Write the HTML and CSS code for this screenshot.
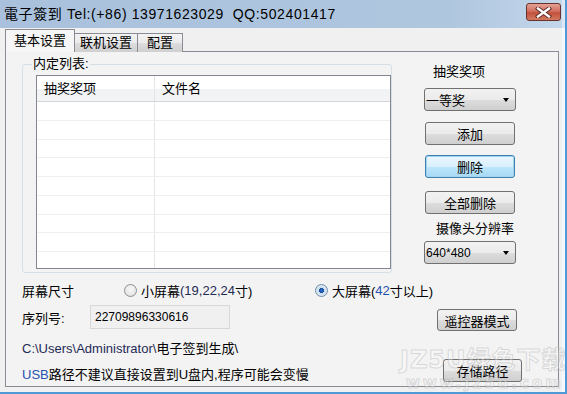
FILE: index.html
```html
<!DOCTYPE html>
<html lang="zh-CN">
<head>
    <meta charset="UTF-8">
    <title>電子簽到</title>
    <link rel="stylesheet" href="styles.css">
</head>
<body>
    <div class="window">
        <div class="titlebar">
            <span class="title">電子簽到 Tel:(+86) 13971623029&nbsp;&nbsp;QQ:502401417</span>
            <div class="close-btn">
                <svg width="17" height="11" viewBox="0 0 17 11">
                    <path d="M3 1.5 L14 9.5 M14 1.5 L3 9.5" stroke="#5a2a24" stroke-width="4.2" stroke-linecap="square"/>
                    <path d="M3 1.5 L14 9.5 M14 1.5 L3 9.5" stroke="#ffffff" stroke-width="2.4" stroke-linecap="square"/>
                </svg>
            </div>
        </div>

        <div class="client">
            <div class="tabs">
                <div class="tab active">基本设置</div>
                <div class="tab">联机设置</div>
                <div class="tab tab-wide">配置</div>
            </div>

            <div class="panel">
                <div class="top">
                    <fieldset class="group">
                        <legend>内定列表:</legend>
                        <div class="list">
                            <div class="list-head">
                                <div class="cell col1">抽奖奖项</div>
                                <div class="cell col2">文件名</div>
                            </div>
                            <div class="list-row"><div class="cell col1"></div><div class="cell col2"></div></div>
                            <div class="list-row"><div class="cell col1"></div><div class="cell col2"></div></div>
                            <div class="list-row"><div class="cell col1"></div><div class="cell col2"></div></div>
                            <div class="list-row"><div class="cell col1"></div><div class="cell col2"></div></div>
                            <div class="list-row"><div class="cell col1"></div><div class="cell col2"></div></div>
                            <div class="list-row"><div class="cell col1"></div><div class="cell col2"></div></div>
                            <div class="list-row"><div class="cell col1"></div><div class="cell col2"></div></div>
                            <div class="list-row"><div class="cell col1"></div><div class="cell col2"></div></div>
                            <div class="list-row"><div class="cell col1"></div><div class="cell col2"></div></div>
                        </div>
                    </fieldset>

                    <div class="side">
                        <div class="side-label prize-label">抽奖奖项</div>
                        <div class="combo prize-combo"><span>一等奖</span><span class="arrow"></span></div>
                        <button class="btn add-btn">添加</button>
                        <button class="btn focused del-btn">删除</button>
                        <button class="btn clear-btn">全部删除</button>
                        <div class="side-label cam-label">摄像头分辨率</div>
                        <div class="combo cam-combo"><span class="res">640*480</span><span class="arrow"></span></div>
                    </div>
                </div>

                <div class="row size-row">
                    <span class="row-label">屏幕尺寸</span>
                    <label class="radio small-screen"><span class="dot"></span>小屏幕<span class="ascii">(19,22,24</span>寸)</label>
                    <label class="radio"><span class="dot checked"></span>大屏幕(<span class="blue">42</span>寸以上)</label>
                </div>

                <div class="row serial-row">
                    <span class="serial-label">序列号:</span>
                    <div class="textbox">22709896330616</div>
                    <button class="btn remote-btn">遥控器模式</button>
                </div>

                <div class="row path-row">
                    <span class="ascii">C:\Users\Administrator\</span>电子签到生成\
                </div>

                <div class="row usb-row">
                    <span class="usb-text"><span class="blue">USB</span>路径不建议直接设置到U盘内,程序可能会变慢</span>
                    <button class="btn save-btn">存储路径</button>
                </div>
            </div>
        </div>

        <div class="watermark">
            <div class="wm-big">JZ5U绿色下载</div>
            <div class="wm-small">www.jz5u.com</div>
        </div>
    </div>
</body>
</html>
```

FILE: styles.css
```css
body {
    margin: 0;
    background-color: #f0f0f0;
    font-family: "Liberation Sans", "Noto Sans CJK SC", sans-serif;
    font-size: 13px;
    color: #000;
}
.window {
    position: relative;
    width: 567px;
    height: 394px;
    box-sizing: border-box;
    border-right: 2px solid #4f9ad6;
    border-bottom: 2px solid #4f9ad6;
    background-color: #f0f0f0;
    overflow: hidden;
}
.titlebar {
    height: 28px;
    display: flex;
    align-items: flex-start;
    justify-content: space-between;
    background: linear-gradient(to right, #a9c1dc 0%, #afc6df 80%, #c3d6ea 100%);
    border-right: 3px solid #dbe7f4;
}
.title {
    font-family: "Liberation Sans", "Noto Sans CJK TC", sans-serif;
    font-size: 14px;
    letter-spacing: 0.6px;
    line-height: 16px;
    padding: 6px 0 0 4px;
    white-space: nowrap;
}
.close-btn {
    width: 33px;
    height: 16px;
    margin: 3px 1px 0 0;
    border: 1px solid #6a322c;
    border-radius: 3px;
    background: linear-gradient(to bottom, #e4a294 0%, #d0705f 45%, #c2503d 55%, #d27a5f 100%);
    display: flex;
    align-items: center;
    justify-content: center;
}
.client {
    border-right: 3px solid #f4f7fb;
    height: 364px;
    padding-top: 2px;
}
.tabs {
    display: flex;
    align-items: flex-end;
    margin-left: 5px;
    height: 22px;
    margin-bottom: -1px;
    position: relative;
}
.tab {
    height: 18px;
    line-height: 18px;
    padding: 0 5px;
    margin-right: -1px;
    border: 1px solid #898c95;
    border-bottom: none;
    background: linear-gradient(to bottom, #f2f2f2 0%, #ebebeb 50%, #dddddd 51%, #cfcfcf 100%);
}
.tab-wide {
    padding: 0 9px;
}
.tab.active {
    height: 22px;
    line-height: 21px;
    padding: 0 8px;
    background: #f6f6f6;
    position: relative;
    z-index: 1;
}
.panel {
    margin-left: 5px;
    width: 554px;
    height: 336px;
    box-sizing: border-box;
    border: 1px solid #898c95;
    background: #f3f3f3;
    padding-left: 16px;
}
.top {
    display: flex;
    height: 224px;
}
.group {
    margin: 5px 0 0 0;
    padding: 0;
    width: 370px;
    height: 216px;
    box-sizing: border-box;
    border: 1px solid #d5dfe5;
    border-radius: 3px;
}
.group legend {
    padding: 0 1px;
    margin-left: 9px;
    line-height: 14px;
}
.list {
    margin: 4px 0 0 13px;
    width: 355px;
    height: 194px;
    box-sizing: border-box;
    border: 1px solid #828790;
    background: #fff;
    overflow: hidden;
}
.list-head {
    display: flex;
    height: 25px;
    border-bottom: 1px solid #d5d5d5;
    background: linear-gradient(to bottom, #ffffff 0%, #ffffff 50%, #f1f2f4 51%, #f3f4f6 100%);
}
.list-head .cell {
    line-height: 25px;
    padding-left: 7px;
}
.list-row {
    display: flex;
    height: 18.75px;
    box-sizing: border-box;
    border-bottom: 1px solid #efefef;
}
.cell {
    box-sizing: border-box;
}
.col1 {
    width: 118px;
    border-right: 1px solid #e5e5e5;
}
.col2 {
    flex: 1;
}
.side {
    margin-left: 32px;
    width: 93px;
    display: flex;
    flex-direction: column;
}
.side-label {
    line-height: 16px;
}
.prize-label {
    margin-top: 12px;
    padding-left: 9px;
}
.cam-label {
    margin-top: 7px;
    padding-left: 12px;
}
.combo {
    height: 23px;
    width: 92px;
    box-sizing: border-box;
    border: 1px solid #707070;
    border-radius: 3px;
    background: linear-gradient(to bottom, #f2f2f2 0%, #ebebeb 50%, #dddddd 51%, #cfcfcf 100%);
    display: flex;
    align-items: center;
    justify-content: space-between;
    padding: 0 6px 0 1px;
}
.prize-combo {
    margin-top: 8px;
}
.cam-combo {
    margin-top: 4px;
}
.res {
    font-size: 12px;
}
.arrow {
    width: 0;
    height: 0;
    border-left: 3.5px solid transparent;
    border-right: 3.5px solid transparent;
    border-top: 4px solid #000;
}
.btn {
    font-family: inherit;
    font-size: 13px;
    color: #000;
    height: 23px;
    padding: 0;
    box-sizing: border-box;
    border: 1px solid #707070;
    border-radius: 3px;
    background: linear-gradient(to bottom, #f2f2f2 0%, #ebebeb 50%, #dddddd 51%, #cfcfcf 100%);
}
.side .btn {
    width: 90px;
    margin-left: 1px;
}
.add-btn {
    margin-top: 11px;
}
.del-btn {
    margin-top: 10px;
}
.clear-btn {
    margin-top: 13px;
}
.btn.focused {
    border-color: #3c7fb1;
    background: linear-gradient(to bottom, #eaf6fd 0%, #d9f0fc 50%, #bee6fd 51%, #a7d9f5 100%);
    box-shadow: inset 0 0 0 1px #a4d5f0;
}
.row {
    display: flex;
}
.size-row {
    margin-top: 4px;
    height: 20px;
    align-items: center;
}
.row-label {
    width: 102px;
}
.radio {
    display: flex;
    align-items: center;
}
.small-screen {
    width: 191px;
}
.dot {
    width: 11px;
    height: 11px;
    margin-right: 4px;
    border: 1px solid #8e8f8f;
    border-radius: 50%;
    background: radial-gradient(circle at 50% 40%, #f8f8f8 0%, #dcdcdc 100%);
}
.dot.checked {
    background: radial-gradient(circle at 50% 50%, #2a6cc8 0%, #1c4f9e 32%, #c9dcef 36%, #eef4fa 100%);
    border-color: #6f8ba6;
}
.ascii {
    color: #1f2a55;
}
.blue {
    color: #2452b0;
}
.serial-row {
    margin-top: 2px;
    height: 30px;
    align-items: center;
}
.serial-label {
    width: 68px;
}
.textbox {
    width: 140px;
    height: 24px;
    box-sizing: border-box;
    border: 1px solid #d7d7d7;
    background: #f0f0f0;
    font-size: 12px;
    line-height: 22px;
    padding-left: 4px;
}
.remote-btn {
    width: 80px;
    margin: 6px 0 0 207px;
    height: 22px;
}
.path-row {
    margin-top: 8px;
    height: 18px;
    line-height: 18px;
}
.usb-row {
    height: 28px;
    align-items: flex-start;
}
.usb-text {
    margin-top: 9px;
    line-height: 16px;
    width: 421px;
}
.save-btn {
    width: 79px;
    margin-top: 1px;
}
.watermark {
    position: absolute;
    left: 400px;
    top: 346px;
    white-space: nowrap;
    pointer-events: none;
    font-family: "DejaVu Sans", "Noto Sans CJK SC", sans-serif;
    font-weight: bold;
    color: rgba(255, 255, 255, 0.3);
    -webkit-text-stroke: 1px rgba(160, 160, 160, 0.35);
}
.wm-big {
    font-size: 24px;
    line-height: 28px;
    letter-spacing: 1px;
}
.wm-small {
    font-size: 15px;
    line-height: 18px;
    padding-left: 6px;
    letter-spacing: 3px;
}
```
